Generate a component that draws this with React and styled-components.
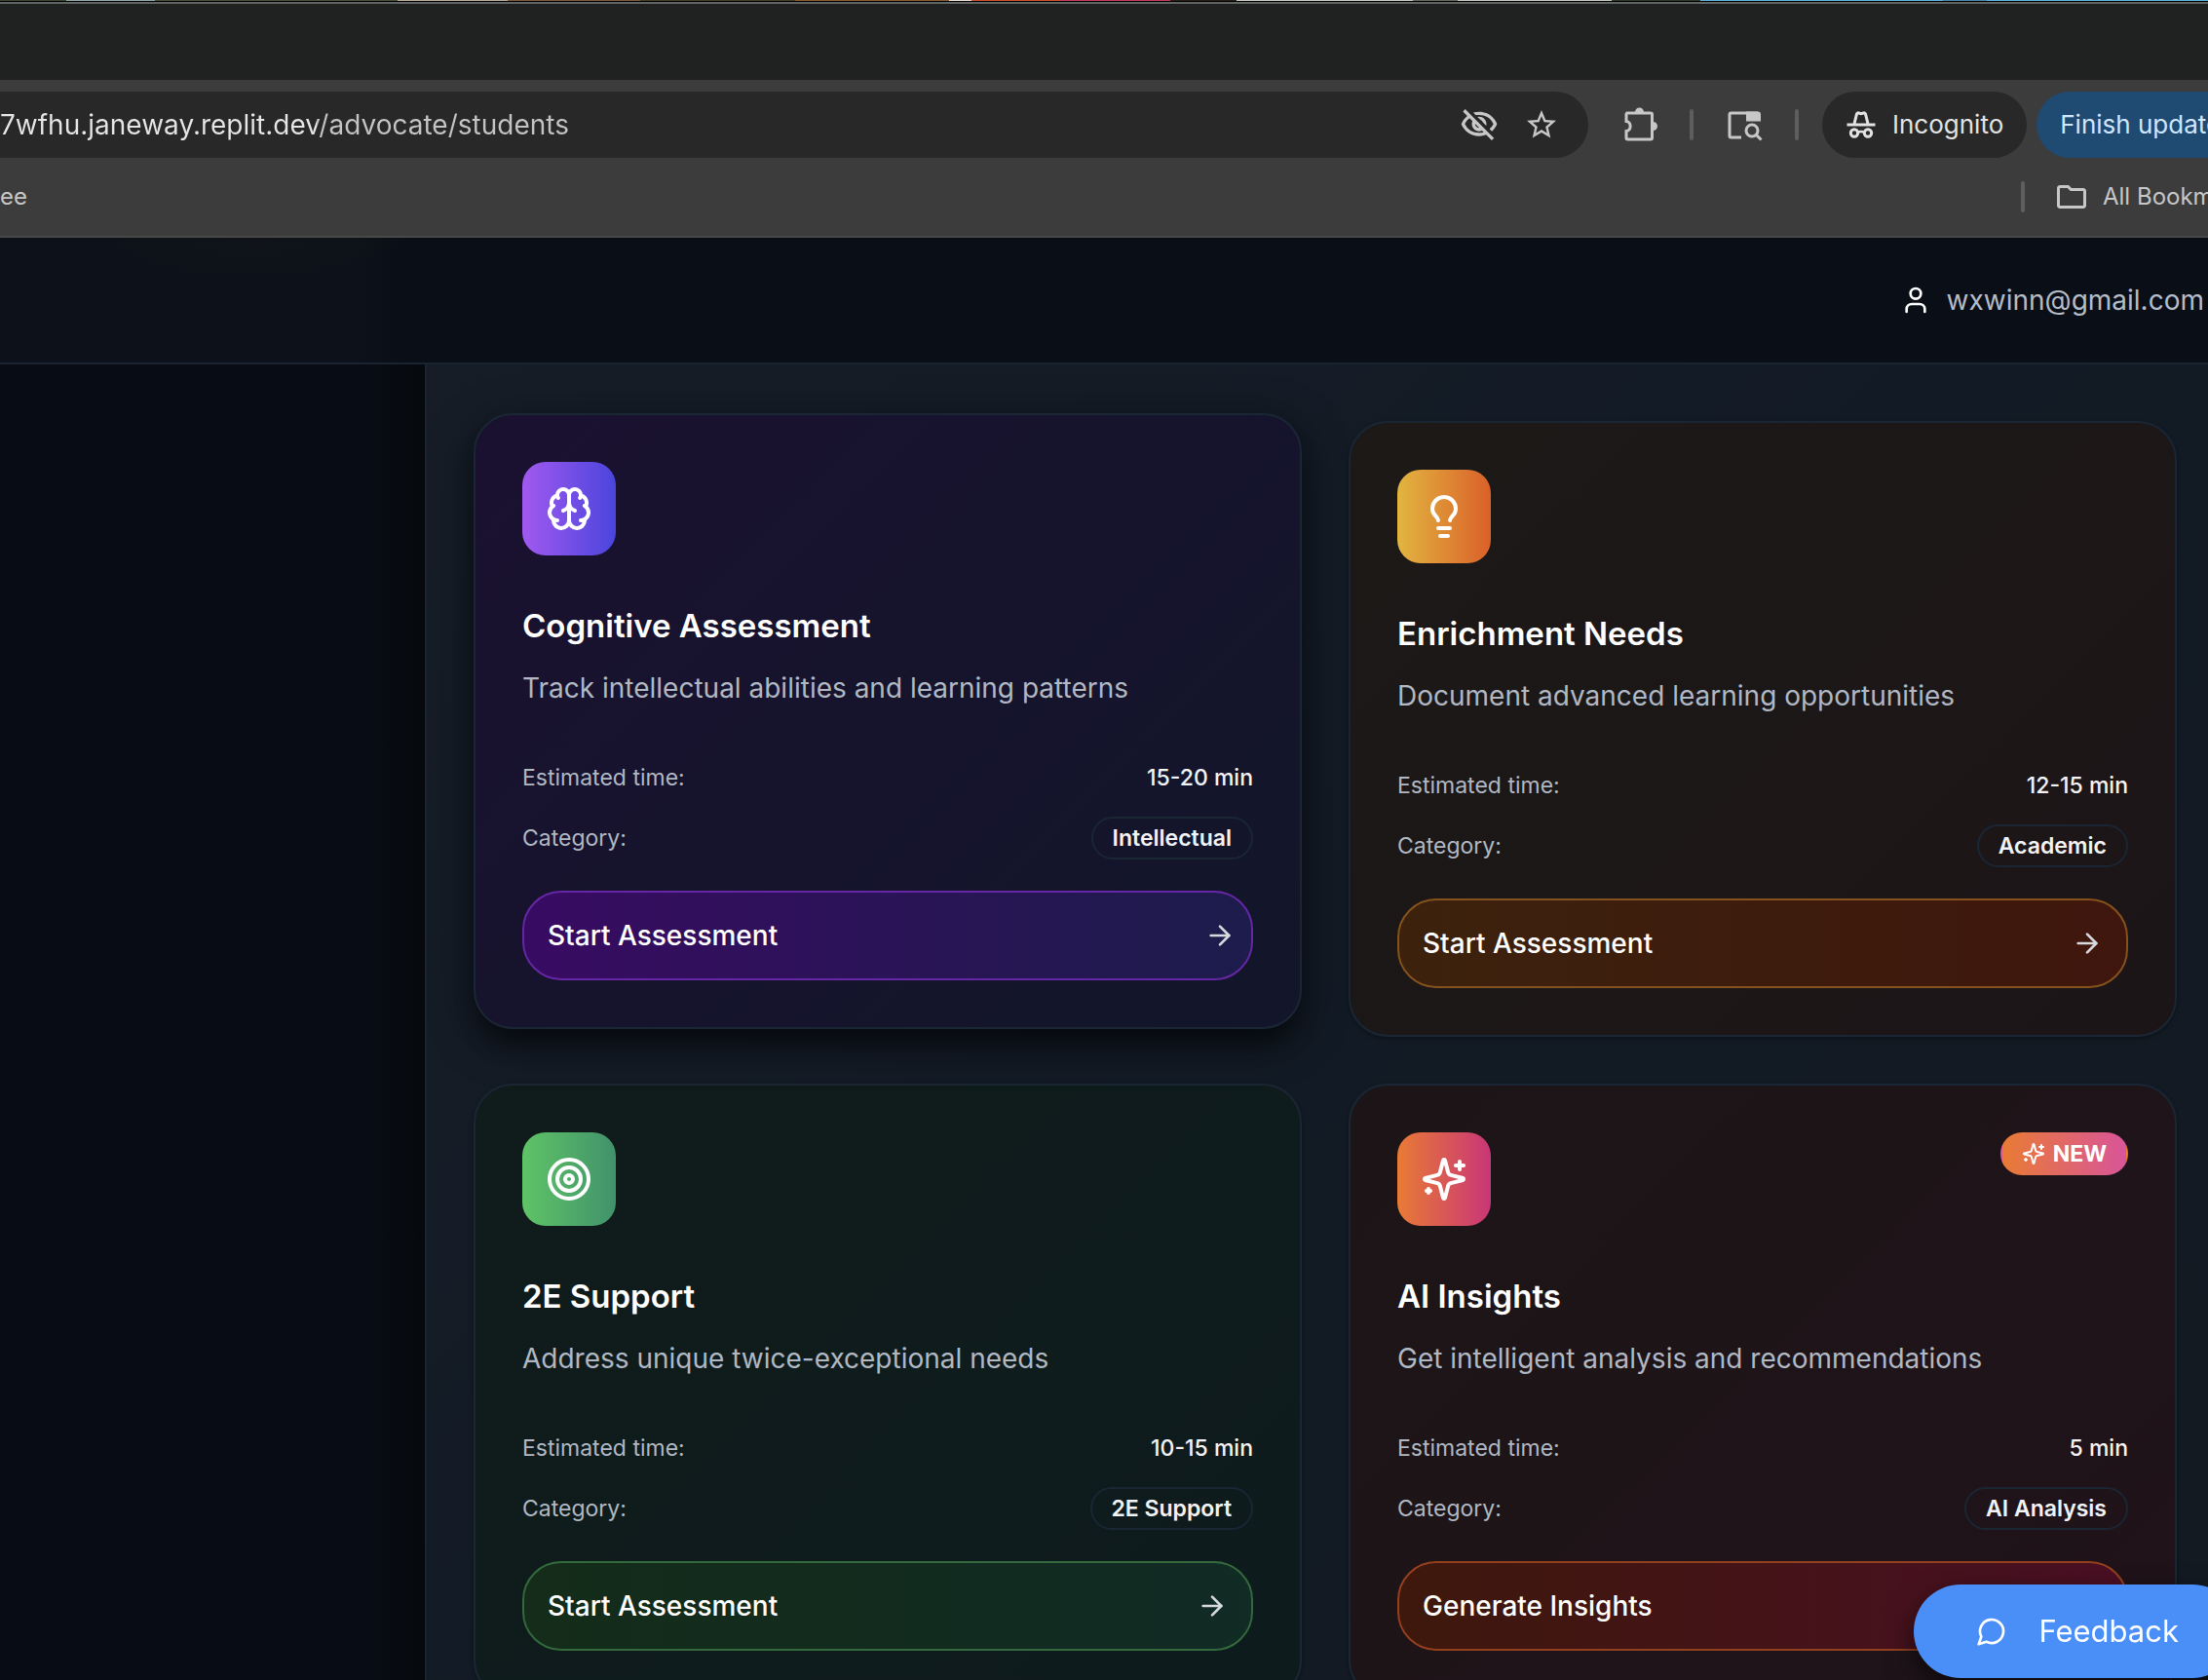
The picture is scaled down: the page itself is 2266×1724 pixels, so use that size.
import React from 'react';
import styled, { createGlobalStyle } from 'styled-components';
import { ArrowRight, Lightbulb, User } from 'lucide-react';
import { MdOutlineFolder, MdOutlineVisibilityOff, MdStarOutline } from 'react-icons/md';

const GlobalStyle = createGlobalStyle`
  *, *::before, *::after { box-sizing: border-box; }
  body {
    margin: 0;
    background: #0a0e16;
    font-family: Inter, "Liberation Sans", sans-serif;
    color: #fff;
  }
  button, input { font-family: inherit; }
`;

const Screen = styled.div`
  display: flex;
  flex-direction: column;
  height: 100vh;
  overflow: hidden;
`;

/* ---------- Browser chrome ---------- */

const Wallpaper = styled.div`
  flex: none;
  height: 1px;
  background: linear-gradient(
    to right,
    #3d4630 0 3%, #90a8a8 3% 7%, #4a5038 7% 18%, #b8ab98 18% 23%, #80583a 23% 29%,
    #45401f 29% 36%, #8a5a30 36% 43%, #e8e0d8 43% 44%, #d0502e 44% 48%, #c83a60 48% 53%,
    #282018 53% 56%, #c8ccc4 56% 64%, #686a62 64% 66%, #c4c8c0 66% 73%, #2e3828 73% 77%,
    #5ab4e0 77% 88%, #4a86a8 88% 90%, #5ab4e0 90% 100%
  );
`;

const TabStrip = styled.div`
  flex: none;
  height: 81px;
  background: #202221;
  border-top: 1px solid #000;
  box-shadow: inset 0 2px 0 #606462;
`;

const Toolbar = styled.div`
  flex: none;
  display: flex;
  align-items: center;
  padding: 12px 0;
  background: #3c3c3c;
`;

const Omnibox = styled.form`
  flex: 1;
  min-width: 0;
  height: 68px;
  display: flex;
  align-items: center;
  gap: 26px;
  padding-right: 30px;
  border-radius: 0 34px 34px 0;
  background: #282828;
`;

const Address = styled.input`
  flex: 1;
  min-width: 0;
  padding: 0;
  border: 0;
  outline: 0;
  font-size: 28px;
  line-height: 40px;
  color: transparent;
  background: linear-gradient(to right, #e6e6e6 325px, #c4c4c4 325px);
  background-clip: text;
  -webkit-background-clip: text;
`;

const IconButton = styled.button`
  flex: none;
  display: grid;
  place-items: center;
  padding: 0;
  border: 0;
  background: none;
  color: #c7c7c7;
`;

const Actions = styled.div`
  flex: 0 0 636px;
  display: flex;
  align-items: center;
  gap: 32px;
  padding-left: 32px;
  overflow: hidden;
`;

const Divider = styled.span`
  flex: none;
  width: 4px;
  height: 32px;
  border-radius: 2px;
  background: #5e5e5e;
`;

const Pills = styled.div`
  flex: none;
  display: flex;
  gap: 10px;
  margin-left: -8px;
`;

const Pill = styled.button`
  flex: none;
  display: flex;
  align-items: center;
  gap: 16px;
  height: 68px;
  padding: 0 24px;
  border: 0;
  border-radius: 34px;
  font-size: 26px;
  line-height: 40px;
  white-space: nowrap;
  color: ${(p) => (p.$accent ? '#cfe6fd' : '#e3e3e3')};
  background: ${(p) => (p.$accent ? '#1f4a72' : '#282828')};
`;

const Bookmarks = styled.nav`
  flex: none;
  display: flex;
  align-items: center;
  justify-content: space-between;
  height: 70px;
  padding-bottom: 12px;
  border-bottom: 2px solid #474947;
  background: #3c3c3c;
`;

const Bookmark = styled.a`
  display: flex;
  align-items: center;
  gap: 14px;
  font-size: 24px;
  line-height: 32px;
  white-space: nowrap;
  text-decoration: none;
  color: #c7c7c7;
`;

const AllBookmarks = styled.div`
  flex: 0 0 192px;
  display: flex;
  align-items: center;
  gap: 30px;
  overflow: hidden;
`;

/* ---------- Application ---------- */

const AppHeader = styled.header`
  flex: none;
  display: flex;
  align-items: center;
  justify-content: flex-end;
  height: 130px;
  padding-right: 4px;
  border-bottom: 2px solid #1a2431;
  background:
    radial-gradient(ellipse 160px 44px at 256px 0, #10131a, transparent),
    linear-gradient(to right, #0d1119 370px, #0a0e16 410px);
`;

const Account = styled.button`
  display: flex;
  align-items: center;
  gap: 16px;
  padding: 0;
  border: 0;
  background: none;
  font-size: 28px;
  line-height: 40px;
  color: #b4bcc8;

  svg { color: #fff; }
`;

const Body = styled.div`
  flex: 1;
  min-height: 0;
  display: flex;
`;

const Sidebar = styled.aside`
  flex: 0 0 438px;
  border-right: 2px solid #1a2431;
  background: linear-gradient(to right, #080c14 380px, #06090c 436px);
`;

const Main = styled.main`
  flex: 1;
  min-width: 0;
  padding: 58px 32px 0 48px;
  overflow: hidden;
  background: linear-gradient(135deg, #161d27, #121a25 50%, #131a22);
`;

const Grid = styled.div`
  display: grid;
  grid-template-columns: 1fr 1fr;
  gap: 48px;
`;

const Card = styled.article`
  padding: 48px;
  border: 2px solid #1a2633;
  border-radius: 40px;
  background: ${(p) => p.$bg};
  background-clip: padding-box;
  box-shadow: ${(p) =>
    p.$raised
      ? '0 20px 24px -8px rgba(0, 0, 0, 0.45), 0 12px 48px rgba(0, 0, 0, 0.45)'
      : '0 2px 4px rgba(0, 0, 0, 0.3)'};
  transform: ${(p) => (p.$raised ? 'translateY(-8px)' : 'none')};
`;

const CardTop = styled.div`
  display: flex;
  align-items: flex-start;
  justify-content: space-between;
`;

const IconTile = styled.div`
  display: grid;
  place-items: center;
  width: 96px;
  height: 96px;
  border-radius: 24px;
  background: ${(p) => p.$bg};
`;

const NewBadge = styled.span`
  display: flex;
  align-items: center;
  gap: 8px;
  padding: 4px 20px;
  border: 2px solid transparent;
  border-radius: 22px;
  background: linear-gradient(to right, #e97b35, #d9559a);
  font-size: 23px;
  line-height: 32px;
  font-weight: 700;
`;

const Title = styled.h3`
  margin: 48px 0 20px;
  font-size: 33px;
  line-height: 48px;
  font-weight: 600;
`;

const Description = styled.p`
  margin: 0 0 56px;
  font-size: 28px;
  line-height: 40px;
  color: #b0b8c4;
`;

const Facts = styled.dl`
  display: flex;
  flex-direction: column;
  gap: 24px;
  margin: 0 0 32px;
`;

const Fact = styled.div`
  display: flex;
  align-items: center;
  justify-content: space-between;
  font-size: 23px;
  line-height: 32px;
`;

const FactName = styled.dt`
  color: #b0b8c4;
`;

const FactValue = styled.dd`
  margin: 0;
  padding: ${(p) => (p.$tag ? '4px 20px' : '0')};
  border: ${(p) => (p.$tag ? '2px solid #1a2633' : '0')};
  border-radius: 22px;
  font-weight: ${(p) => (p.$tag ? 600 : 500)};
  color: #f1f3f6;
`;

const StartButton = styled.button`
  display: flex;
  align-items: center;
  justify-content: space-between;
  width: 100%;
  height: 92px;
  padding: 0 24px;
  border: 2px solid ${(p) => p.$border};
  border-radius: 40px;
  background: ${(p) => p.$bg};
  font-size: 28px;
  line-height: 40px;
  font-weight: 500;
  color: #fff;

  svg {
    color: #d6d9de;
    transform: translateX(${(p) => (p.$raised ? '8px' : '0')});
  }
`;

const Feedback = styled.button`
  position: fixed;
  right: -32px;
  bottom: 2px;
  display: flex;
  align-items: center;
  gap: 32px;
  height: 96px;
  padding: 0 62px 0 64px;
  border: 0;
  border-radius: 48px;
  background: #4a8ff8;
  box-shadow: 0 12px 30px rgba(0, 0, 0, 0.6);
  font-size: 31px;
  line-height: 48px;
  color: #fff;
`;

/* ---------- Drawn icons ---------- */

const ExtensionIcon = () => (
  <svg width="40" height="40" viewBox="0 0 40 40" aria-hidden="true">
    <path
      d="M7 8h25q1.500 0 1.500 1.500v24q0 1.500-1.500 1.500H8.500Q7 35 7 33.500v-7c5.500-.5 5.500-9.500 0-10v-7Q7 8 8.500 8z"
      fill="none"
      stroke="currentColor"
      strokeWidth="3"
    />
    <path d="M16 7a4.500 4.500 0 0 1 9 0zM34.500 17a4 4 0 0 1 0 9z" fill="currentColor" />
  </svg>
);

const SidePanelIcon = () => (
  <svg width="40" height="40" viewBox="0 0 40 40" aria-hidden="true">
    <path
      d="M34 8H6.500Q5 8 5 9.500v22Q5 33 6.500 33H17"
      fill="none"
      stroke="currentColor"
      strokeWidth="3"
    />
    <path d="M22 6.500h12q3 0 3 3v7H22z" fill="currentColor" />
    <circle cx="28" cy="26" r="6" fill="none" stroke="currentColor" strokeWidth="3" />
    <path d="m32 30 5.500 5.500" stroke="currentColor" strokeWidth="3" />
  </svg>
);

const IncognitoIcon = () => (
  <svg width="32" height="32" viewBox="0 0 32 32" fill="none" stroke="currentColor" aria-hidden="true">
    <path d="M1.500 16h29" strokeWidth="3" />
    <path d="m9 15 2.500-10q.5-1.500 2-1l2.500.8 2.500-.8q1.500-.5 2 1L23 15" strokeWidth="3" />
    <circle cx="9" cy="24.500" r="3.700" strokeWidth="3" />
    <circle cx="23" cy="24.500" r="3.700" strokeWidth="3" />
    <path d="M12.500 24q3.500-2 7 0" strokeWidth="2.500" />
  </svg>
);

const LineIcon = ({ size, children }) => (
  <svg
    width={size}
    height={size}
    viewBox="0 0 24 24"
    fill="none"
    stroke="currentColor"
    strokeWidth="2"
    strokeLinecap="round"
    strokeLinejoin="round"
    aria-hidden="true"
  >
    {children}
  </svg>
);

const TargetIcon = () => (
  <LineIcon size={48}>
    <circle cx="12" cy="12" r="10" />
    <circle cx="12" cy="12" r="6" />
    <circle cx="12" cy="12" r="2" />
  </LineIcon>
);

const BrainIcon = () => (
  <LineIcon size={48}>
    <path d="M12 5a3 3 0 1 0-5.997.125 4 4 0 0 0-2.526 5.770 4 4 0 0 0 .556 6.588A4 4 0 1 0 12 18Z" />
    <path d="M12 5a3 3 0 1 1 5.997.125 4 4 0 0 1 2.526 5.770 4 4 0 0 1-.556 6.588A4 4 0 1 1 12 18Z" />
    <path d="M15 13a4.500 4.500 0 0 1-3-4 4.500 4.500 0 0 1-3 4" />
    <path d="M17.599 6.500a3 3 0 0 0 .399-1.375" />
    <path d="M6.003 5.125A3 3 0 0 0 6.401 6.500" />
    <path d="M3.477 10.896a4 4 0 0 1 .585-.396" />
    <path d="M19.938 10.500a4 4 0 0 1 .585.396" />
    <path d="M6 18a4 4 0 0 1-1.967-.516" />
    <path d="M19.967 17.484A4 4 0 0 1 18 18" />
  </LineIcon>
);

const SparkIcon = ({ size }) => (
  <LineIcon size={size}>
    <path d="M9.937 15.500A2 2 0 0 0 8.500 14.063l-6.135-1.582a.5.5 0 0 1 0-.962L8.500 9.936A2 2 0 0 0 9.937 8.500l1.582-6.135a.5.5 0 0 1 .963 0L14.063 8.500A2 2 0 0 0 15.500 9.937l6.135 1.581a.5.5 0 0 1 0 .964L15.500 14.063a2 2 0 0 0-1.437 1.437l-1.582 6.135a.5.5 0 0 1-.963 0z" />
    <path d="M20 3v4" />
    <path d="M22 5h-4" />
    <path d="M4 17v2" />
    <path d="M5 18H3" />
  </LineIcon>
);

const ChatIcon = () => (
  <LineIcon size={32}>
    <path d="M7.900 20A9 9 0 1 0 4 16.100L2 22Z" />
  </LineIcon>
);

/* ---------- Content ---------- */

const cards = [
  {
    title: 'Cognitive Assessment',
    text: 'Track intellectual abilities and learning patterns',
    time: '15-20 min',
    category: 'Intellectual',
    action: 'Start Assessment',
    icon: <BrainIcon />,
    raised: true,
    bg: 'linear-gradient(135deg, #1a1130, #12162a)',
    tile: 'linear-gradient(to right, #a259f0, #4a45dc)',
    button: 'linear-gradient(to right, #380b62, #1d1c4c)',
    border: '#6527a5',
  },
  {
    title: 'Enrichment Needs',
    text: 'Document advanced learning opportunities',
    time: '12-15 min',
    category: 'Academic',
    action: 'Start Assessment',
    icon: <Lightbulb size={48} aria-hidden="true" />,
    bg: 'linear-gradient(135deg, #1c1917, #1c1518)',
    tile: 'linear-gradient(to right, #e2b540, #da6029)',
    button: 'linear-gradient(to right, #3c220d, #3f160d)',
    border: '#85521d',
  },
  {
    title: '2E Support',
    text: 'Address unique twice-exceptional needs',
    time: '10-15 min',
    category: '2E Support',
    action: 'Start Assessment',
    icon: <TargetIcon />,
    bg: 'linear-gradient(135deg, #101c1b, #0e1b1d)',
    tile: 'linear-gradient(to right, #5fc467, #41926b)',
    button: 'linear-gradient(to right, #142c19, #112b25)',
    border: '#33693c',
  },
  {
    title: 'AI Insights',
    text: 'Get intelligent analysis and recommendations',
    time: '5 min',
    category: 'AI Analysis',
    action: 'Generate Insights',
    icon: <SparkIcon size={48} />,
    isNew: true,
    bg: 'linear-gradient(135deg, #1c1517, #20131a)',
    tile: 'linear-gradient(to right, #e97b35, #c83677)',
    button: 'linear-gradient(to right, #3e180c, #4a0f24)',
    border: '#94401f',
  },
];

const AssessmentCard = ({ card }) => (
  <Card $bg={card.bg} $raised={card.raised}>
    <CardTop>
      <IconTile $bg={card.tile}>{card.icon}</IconTile>
      {card.isNew && (
        <NewBadge>
          <SparkIcon size={24} />
          NEW
        </NewBadge>
      )}
    </CardTop>
    <Title>{card.title}</Title>
    <Description>{card.text}</Description>
    <Facts>
      <Fact>
        <FactName>Estimated time:</FactName>
        <FactValue>{card.time}</FactValue>
      </Fact>
      <Fact>
        <FactName>Category:</FactName>
        <FactValue $tag>{card.category}</FactValue>
      </Fact>
    </Facts>
    <StartButton type="button" $bg={card.button} $border={card.border} $raised={card.raised}>
      {card.action}
      <ArrowRight size={32} aria-hidden="true" />
    </StartButton>
  </Card>
);

export default function App() {
  return (
    <Screen>
      <GlobalStyle />
      <Wallpaper />
      <TabStrip />
      <Toolbar>
        <Omnibox onSubmit={(e) => e.preventDefault()}>
          <Address aria-label="Address" defaultValue="7wfhu.janeway.replit.dev/advocate/students" />
          <IconButton type="button" aria-label="Third-party cookies blocked">
            <MdOutlineVisibilityOff size={40} />
          </IconButton>
          <IconButton type="button" aria-label="Bookmark this tab">
            <MdStarOutline size={36} />
          </IconButton>
        </Omnibox>
        <Actions>
          <IconButton type="button" aria-label="Extensions">
            <ExtensionIcon />
          </IconButton>
          <Divider />
          <IconButton type="button" aria-label="Side panel">
            <SidePanelIcon />
          </IconButton>
          <Divider />
          <Pills>
            <Pill type="button">
              <IncognitoIcon />
              Incognito
            </Pill>
            <Pill type="button" $accent>
              Finish update
            </Pill>
          </Pills>
        </Actions>
      </Toolbar>
      <Bookmarks>
        <Bookmark href="#ee">ee</Bookmark>
        <AllBookmarks>
          <Divider />
          <Bookmark href="#all">
            <MdOutlineFolder size={36} />
            All Bookmarks
          </Bookmark>
        </AllBookmarks>
      </Bookmarks>
      <AppHeader>
        <Account type="button">
          <User size={32} aria-hidden="true" />
          wxwinn@gmail.com
        </Account>
      </AppHeader>
      <Body>
        <Sidebar />
        <Main>
          <Grid>
            {cards.map((card) => (
              <AssessmentCard key={card.title} card={card} />
            ))}
          </Grid>
        </Main>
      </Body>
      <Feedback type="button">
        <ChatIcon />
        Feedback
      </Feedback>
    </Screen>
  );
}
